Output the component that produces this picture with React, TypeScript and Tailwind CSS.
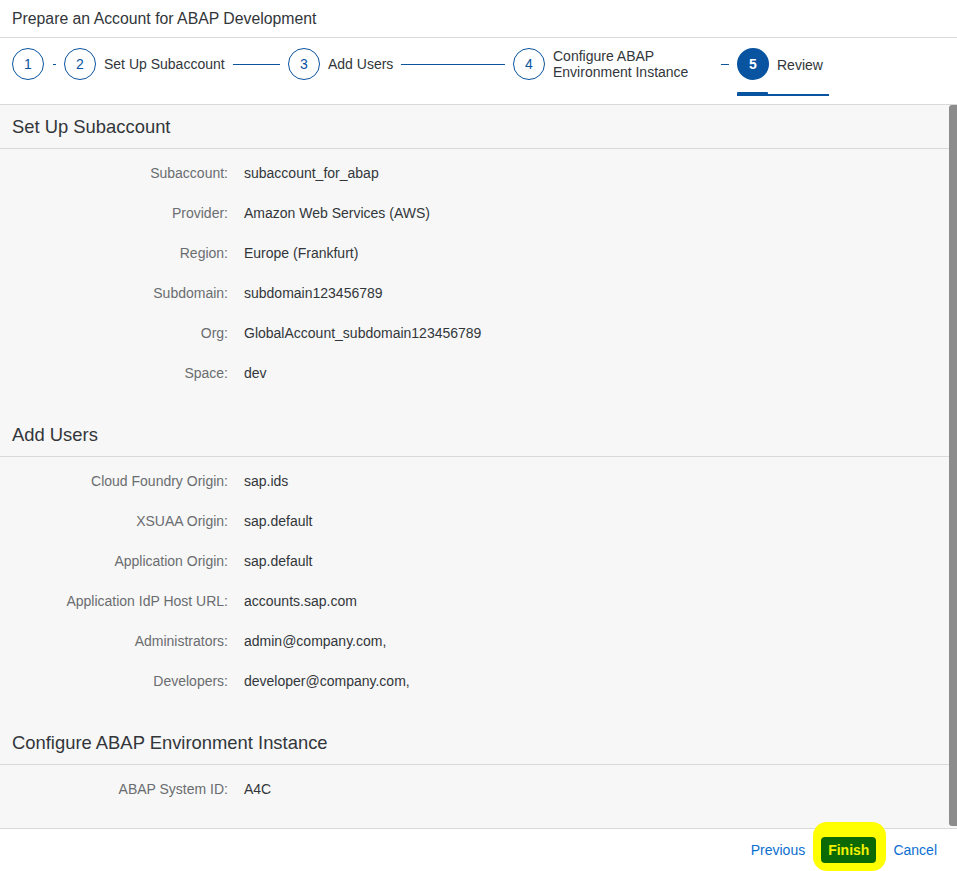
const font = { fontFamily: '"Liberation Sans", Arial, sans-serif' };

type Row = { label: string; value: string };

const sections: { title: string; rows: Row[] }[] = [
  {
    title: "Set Up Subaccount",
    rows: [
      { label: "Subaccount:", value: "subaccount_for_abap" },
      { label: "Provider:", value: "Amazon Web Services (AWS)" },
      { label: "Region:", value: "Europe (Frankfurt)" },
      { label: "Subdomain:", value: "subdomain123456789" },
      { label: "Org:", value: "GlobalAccount_subdomain123456789" },
      { label: "Space:", value: "dev" },
    ],
  },
  {
    title: "Add Users",
    rows: [
      { label: "Cloud Foundry Origin:", value: "sap.ids" },
      { label: "XSUAA Origin:", value: "sap.default" },
      { label: "Application Origin:", value: "sap.default" },
      { label: "Application IdP Host URL:", value: "accounts.sap.com" },
      { label: "Administrators:", value: "admin@company.com," },
      { label: "Developers:", value: "developer@company.com," },
    ],
  },
  {
    title: "Configure ABAP Environment Instance",
    rows: [{ label: "ABAP System ID:", value: "A4C" }],
  },
];

const Circle = ({ n, active }: { n: number; active?: boolean }) => (
  <div
    className={
      active
        ? "flex h-8 w-8 shrink-0 items-center justify-center rounded-full bg-[#0854a0] text-[14px] font-bold text-white"
        : "flex h-8 w-8 shrink-0 items-center justify-center rounded-full border border-[#0854a0] text-[14px] text-[#0854a0]"
    }
  >
    {n}
  </div>
);

const Line = () => <div className="mx-2 h-px flex-1 bg-[#0854a0]" />;

export default function App() {
  return (
    <div className="flex h-[871px] w-[957px] flex-col bg-white text-[#32363a]" style={font}>
      {/* Title */}
      <div className="flex h-[38px] shrink-0 items-center border-b border-[#d9d9d9] px-3 text-[15.8px]">
        Prepare an Account for ABAP Development
      </div>

      {/* Wizard steps */}
      <div className="flex h-[67px] shrink-0 items-start border-b border-[#d9d9d9] pl-3 pt-[10px]">
        <div className="flex w-[52px] items-center">
          <Circle n={1} />
          <div className="ml-[9px] mr-2 h-px flex-1 bg-[#0854a0]" />
        </div>
        <div className="flex w-[224px] items-center">
          <Circle n={2} />
          <span className="ml-2 text-[14px]">Set Up Subaccount</span>
          <Line />
        </div>
        <div className="flex w-[225px] items-center">
          <Circle n={3} />
          <span className="ml-2 text-[14px]">Add Users</span>
          <Line />
        </div>
        <div className="flex w-[224px] items-center">
          <Circle n={4} />
          <span className="ml-2 w-[160px] text-[14px] leading-[16px]">
            Configure ABAP Environment Instance
          </span>
          <Line />
        </div>
        <div className="relative flex h-[56px] w-[92px] items-start">
          <Circle n={5} active />
          <span className="ml-2 mt-[7px] text-[14px]">Review</span>
          <div className="absolute bottom-[8px] left-0 h-[2px] w-full bg-[#0854a0]" />
          <div className="absolute bottom-[8px] left-0 h-[4px] w-[31px] rounded-t-[1px] bg-[#0854a0]" />
        </div>
      </div>

      {/* Review content */}
      <div className="flex min-h-0 flex-1 bg-[#f7f7f7]">
        <div className="flex-1">
          {sections.map((s) => (
            <div key={s.title}>
              <div className="flex h-[44px] items-center border-b border-[#d9d9d9] px-3 text-[18.4px]">
                {s.title}
              </div>
              <div className="pb-5 pt-1">
                {s.rows.map((r) => (
                  <div key={r.label} className="flex h-10 items-center text-[14px]">
                    <div className="w-[228px] text-right text-[#6a6d70]">{r.label}</div>
                    <div className="pl-4">{r.value}</div>
                  </div>
                ))}
              </div>
            </div>
          ))}
        </div>
        <div className="mb-[2px] w-[8px] rounded-l-[3px] bg-[#8c8c8c]" />
      </div>

      {/* Footer */}
      <div className="relative flex h-[43px] shrink-0 items-center justify-end border-t border-[#d9d9d9] pr-5 text-[14px]">
        <div className="absolute right-[71px] top-[-7px] h-[49px] w-[73px] rounded-[14px] bg-[#ffff00]" />
        <span className="text-[#0a6ed1]">Previous</span>
        <button className="relative ml-4 flex h-[26px] items-center rounded-[4px] bg-[#0b6a06] px-[7px] font-bold text-[#f2f200]">
          Finish
        </button>
        <span className="ml-[17px] text-[#0a6ed1]">Cancel</span>
      </div>
    </div>
  );
}
